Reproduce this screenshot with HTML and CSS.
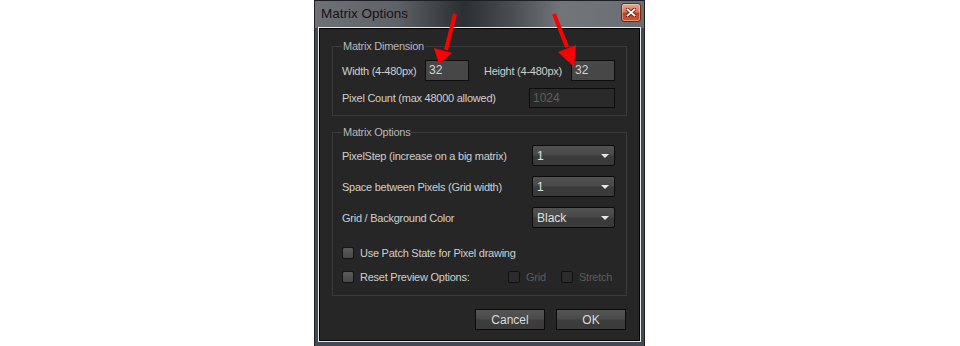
FILE: index.html
```html
<!DOCTYPE html>
<html>
<head>
<meta charset="utf-8">
<link rel="stylesheet" href="styles.css">
</head>
<body>
<div class="window">
  <div class="titlebar">
    <span class="title">Matrix Options</span>
    <span class="close"><svg width="10" height="9" viewBox="0 0 10 9"><path d="M1.5 1.5 L8.5 7.5 M8.5 1.5 L1.5 7.5" stroke="#5a1a10" stroke-width="3.6" stroke-linecap="square"/><path d="M1.5 1.5 L8.5 7.5 M8.5 1.5 L1.5 7.5" stroke="#fff" stroke-width="1.8" stroke-linecap="square"/></svg></span>
  </div>
  <div class="client">
    <fieldset class="group g1">
      <legend>Matrix Dimension</legend>
      <div class="row">
        <span class="lbl w-lbl">Width (4-480px)</span>
        <span class="input w-in">32</span>
        <span class="lbl h-lbl">Height (4-480px)</span>
        <span class="input h-in">32</span>
      </div>
      <div class="row row2">
        <span class="lbl grow">Pixel Count (max 48000 allowed)</span>
        <span class="input disabled pc-in">1024</span>
      </div>
    </fieldset>
    <fieldset class="group g2">
      <legend>Matrix Options</legend>
      <div class="row srow">
        <span class="lbl grow">PixelStep (increase on a big matrix)</span>
        <span class="select"><span>1</span><i class="caret"></i></span>
      </div>
      <div class="row srow">
        <span class="lbl grow">Space between Pixels (Grid width)</span>
        <span class="select"><span>1</span><i class="caret"></i></span>
      </div>
      <div class="row srow">
        <span class="lbl grow">Grid / Background Color</span>
        <span class="select"><span>Black</span><i class="caret"></i></span>
      </div>
      <div class="row crow c1">
        <span class="check"></span><span class="lbl">Use Patch State for Pixel drawing</span>
      </div>
      <div class="row crow c2">
        <span class="check"></span><span class="lbl reset">Reset Preview Options:</span>
        <span class="check off"></span><span class="lbl dim grid">Grid</span>
        <span class="check off"></span><span class="lbl dim">Stretch</span>
      </div>
    </fieldset>
    <div class="buttons">
      <span class="btn">Cancel</span>
      <span class="btn">OK</span>
    </div>
  </div>
</div>
<svg class="arrows" width="960" height="346" viewBox="0 0 960 346">
  <path d="M455 14 L446 50" stroke="#f00" stroke-width="4" fill="none"/>
  <polygon points="434,48 452,53 439,64" fill="#f00"/>
  <path d="M554 14 L567 47" stroke="#f00" stroke-width="4" fill="none"/>
  <polygon points="558,52 576,45 574,67" fill="#f00"/>
</svg>
</body>
</html>
```
FILE: styles.css
```css
html, body {
  margin: 0;
  padding: 0;
  background: #fff;
  width: 960px;
  height: 346px;
  overflow: hidden;
}
body {
  position: relative;
  font-family: "Liberation Sans", Arial, sans-serif;
  font-size: 11px;
  letter-spacing: -0.25px;
}
.window {
  margin-left: 314px;
  width: 331px;
  height: 346px;
  box-sizing: border-box;
  border: 1px solid #1c2026;
  border-bottom: none;
  background: linear-gradient(180deg, rgba(0,0,0,0) 0, rgba(0,0,0,0) 27px, #414a55 27px), linear-gradient(90deg, #6e7276 0%, #5e6165 25%, #2c2f32 45%, #4a4d51 60%, #72767a 75%, #6a6e72 100%);
  display: flex;
  flex-direction: column;
  padding: 0 3px 4px 3px;
}
.titlebar {
  height: 26px;
  display: flex;
  align-items: center;
  justify-content: space-between;
  padding-left: 3px;
  flex: none;
}
.title {
  font-family: "Liberation Sans", Arial, sans-serif;
  font-size: 13.5px;
  letter-spacing: 0;
  color: #141414;
  margin-top: -1px;
}
.close {
  width: 18px;
  height: 17px;
  margin-top: -3px;
  border: 1px solid #6a2a1e;
  border-radius: 3px;
  background: linear-gradient(180deg, #e9a48e 0%, #d9785c 45%, #c0401e 55%, #d05a30 100%);
  display: flex;
  align-items: center;
  justify-content: center;
  box-shadow: inset 0 0 0 1px rgba(255,255,255,0.35);
}
.client {
  flex: 1;
  background: #262626;
  border: 1px solid #e8e8e8;
  box-shadow: inset 0 0 0 1px #000;
  padding: 11px 13px 0 13px;
  display: flex;
  flex-direction: column;
}
.group {
  margin: 0;
  border: 1px solid #3b3b3b;
  padding: 0 11px 0 9px;
  min-width: 0;
}
.group legend {
  color: #b8b8b8;
  padding: 0 1px;
  font-size: 11px;
  line-height: 14px;
}
.g1 { padding-top: 7px; padding-bottom: 7px; }
.g2 { margin-top: 9px; padding-top: 6px; padding-bottom: 12px; }
.row {
  display: flex;
  align-items: center;
  color: #cfcfcf;
}
.lbl { white-space: nowrap; }
.grow { flex: 1; }
.row2 { margin-top: 7px; }
.input {
  box-sizing: border-box;
  height: 21px;
  background: #474747;
  border: 1px solid #0e0e0e;
  color: #d4d4d4;
  font-size: 12px;
  letter-spacing: 0;
  line-height: 19px;
  padding-left: 3px;
}
.w-in { width: 44px; margin-left: auto; }
.w-lbl { width: 83px; }
.h-lbl { margin-left: 15px; flex: 1; }
.h-in { width: 44px; }
.pc-in { width: 86px; background: #2a2a2a; color: #5e5e5e; height: 20px; border-color: #0c0c0c; }
.srow { margin-bottom: 10px; }
.select {
  box-sizing: border-box;
  width: 83px;
  height: 21px;
  border: 1px solid #0a0a0a;
  border-radius: 2px;
  background: linear-gradient(180deg, #525252 0%, #484848 48%, #3b3b3b 52%, #3a3a3a 100%);
  display: flex;
  align-items: center;
  justify-content: space-between;
  padding: 0 5px 0 4px;
  color: #e0e0e0;
  font-size: 12px;
  letter-spacing: 0;
}
.caret {
  width: 0;
  height: 0;
  border-left: 4px solid transparent;
  border-right: 4px solid transparent;
  border-top: 4px solid #e8e8e8;
  margin-top: 1px;
}
.crow { height: 13px; }
.c1 { margin-top: 18px; }
.c2 { margin-top: 11px; }
.check {
  box-sizing: border-box;
  width: 12px;
  height: 12px;
  border: 1px solid #141414;
  border-radius: 2px;
  background: linear-gradient(180deg, #5a5a5a, #484848);
  margin-right: 6px;
  flex: none;
}
.check.off {
  background: #2c2c2c;
  border-color: #101010;
}
.reset { width: 148px; }
.dim { color: #5c5c5c; }
.grid { width: 35px; }
.buttons {
  display: flex;
  justify-content: flex-end;
  gap: 11px;
  margin-top: 13px;
  padding-right: 1px;
}
.btn {
  box-sizing: border-box;
  width: 70px;
  height: 21px;
  border: 1px solid #0a0a0a;
  background: linear-gradient(180deg, #555 0%, #4a4a4a 48%, #3e3e3e 52%, #3a3a3a 100%);
  color: #dcdcdc;
  font-size: 12px;
  letter-spacing: 0;
  display: flex;
  align-items: center;
  justify-content: center;
}
.arrows {
  position: absolute;
  left: 0;
  top: 0;
  pointer-events: none;
}
```
